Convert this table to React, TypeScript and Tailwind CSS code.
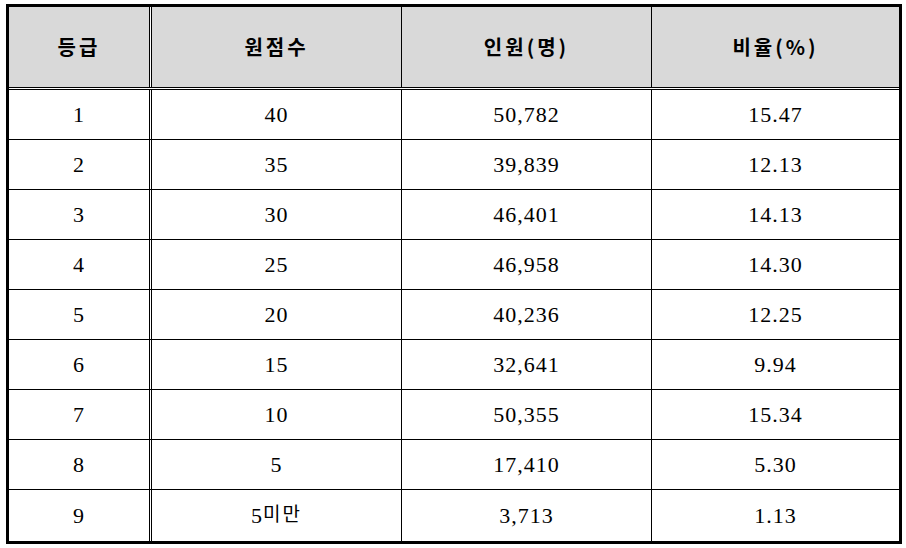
import type { ReactNode } from 'react'

const headers = ['등급', '원점수', '인원(명)', '비율(%)']

const rows: ReactNode[][] = [
  ['1', '40', '50,782', '15.47'],
  ['2', '35', '39,839', '12.13'],
  ['3', '30', '46,401', '14.13'],
  ['4', '25', '46,958', '14.30'],
  ['5', '20', '40,236', '12.25'],
  ['6', '15', '32,641', '9.94'],
  ['7', '10', '50,355', '15.34'],
  ['8', '5', '17,410', '5.30'],
  ['9', <>5<span className="text-[19px] tracking-[2px]">미만</span></>, '3,713', '1.13'],
]

const serif = { fontFamily: '"Liberation Serif", "Noto Sans CJK KR", serif' }
const sans = { fontFamily: '"Noto Sans CJK KR", "Noto Sans", sans-serif' }

const Row = ({ cells, head, last }: { cells: ReactNode[]; head?: boolean; last?: boolean }) => {
  const cell = head
    ? 'flex items-center justify-center bg-[#d9d9d9] text-[20px] font-bold tracking-[3px] text-black'
    : 'flex items-center justify-center text-[22px] tracking-[1px] text-black'
  return (
    <div
      className={
        head
          ? 'flex h-[81px] border-b border-black'
          : last
            ? 'flex flex-1'
            : 'flex h-[50px] border-b border-black'
      }
      style={head ? sans : serif}
    >
      <div className={`${cell} w-[141px] border-r border-black`}>{cells[0]}</div>
      <div className="w-px bg-white" />
      <div className={`${cell} w-[251px] border-l border-r border-black`}>{cells[1]}</div>
      <div className={`${cell} w-[250px] border-r border-black`}>{cells[2]}</div>
      <div className={`${cell} flex-1`}>{cells[3]}</div>
    </div>
  )
}

export default function App() {
  return (
    <div className="w-[906px] h-[548px] bg-white pt-[4px] pl-[6px]">
      <div className="flex flex-col w-[896px] h-[540px] border-[3px] border-black">
        <Row cells={headers} head />
        <div className="h-px bg-white border-b border-black box-content" />
        {rows.map((r, i) => (
          <Row key={i} cells={r} last={i === rows.length - 1} />
        ))}
      </div>
    </div>
  )
}
